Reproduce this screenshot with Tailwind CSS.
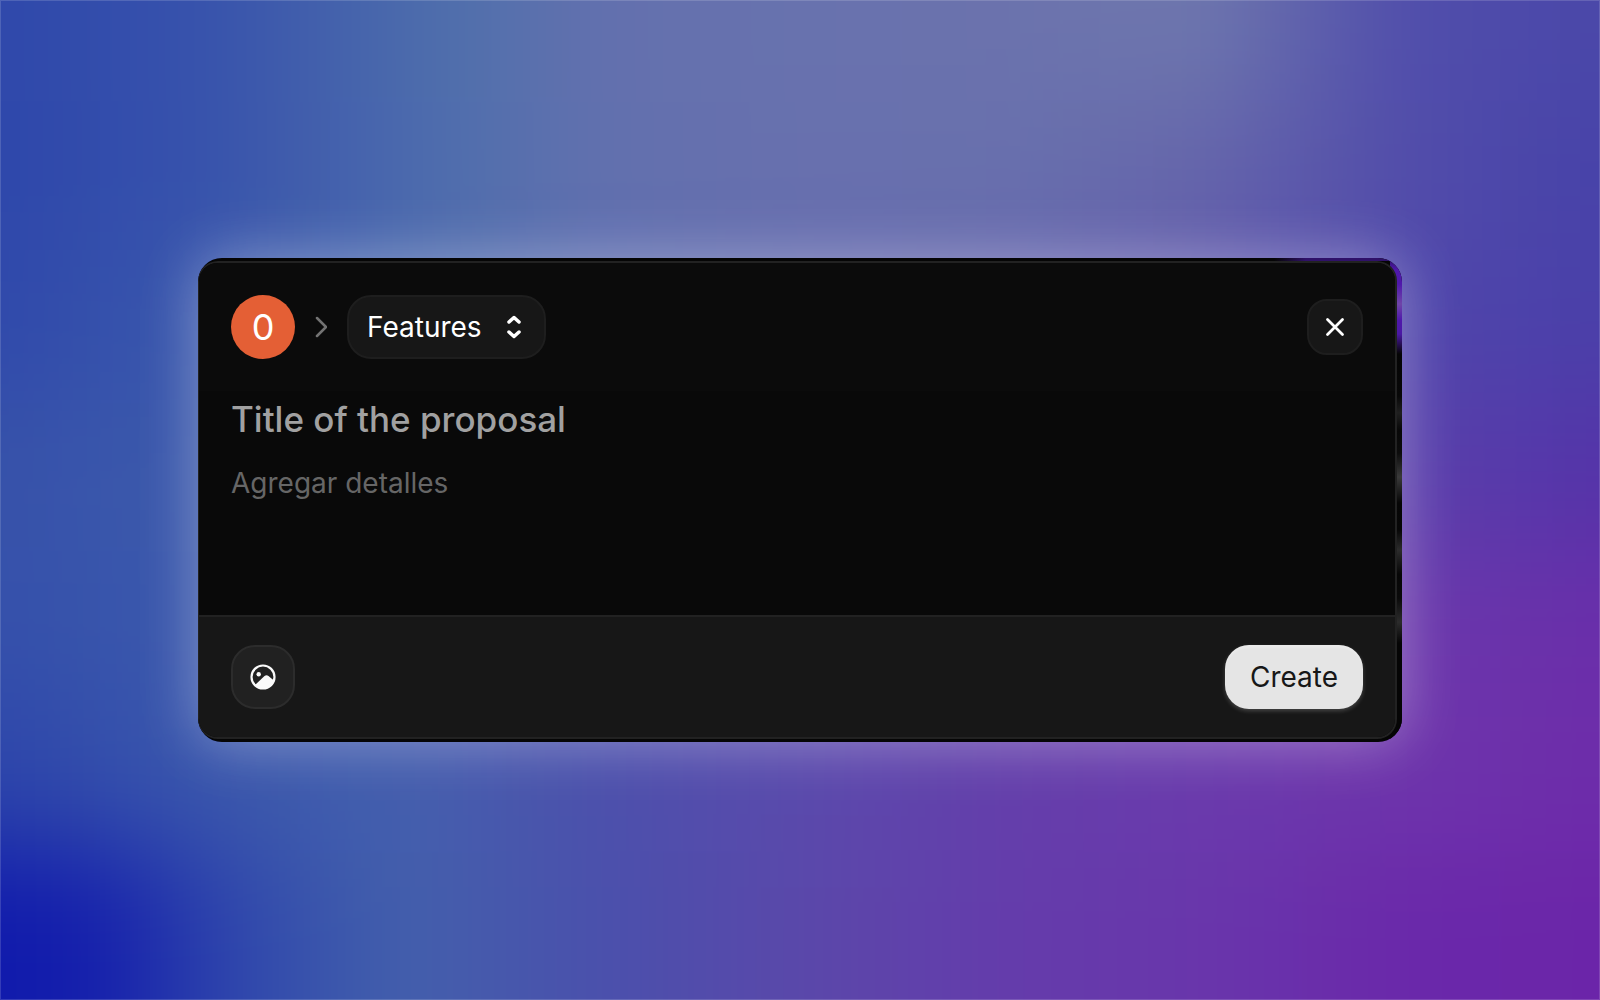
<!DOCTYPE html>
<html lang="en">
<head>
<meta charset="utf-8">
<meta name="viewport" content="width=device-width, initial-scale=1">
<title>New proposal</title>
<script src="https://cdn.jsdelivr.net/npm/@tailwindcss/browser@4"></script>
</head>
<body class="relative isolate flex min-h-screen items-center justify-center overflow-hidden bg-[#4a55ac] font-['Inter',sans-serif]">

<!-- Blurred colour wash behind the dialog -->
<svg class="absolute inset-0 -z-10 h-full w-full" viewBox="0 0 1600 1000" preserveAspectRatio="none" aria-hidden="true">
  <defs>
    <filter id="soft" filterUnits="userSpaceOnUse" x="-200" y="-200" width="2000" height="1400" color-interpolation-filters="sRGB"><feGaussianBlur stdDeviation="40 55"/></filter>
    <linearGradient id="a"><stop offset="0.1" stop-color="#2f48ab"/><stop offset="0.2" stop-color="#3752ac"/><stop offset="0.33" stop-color="#5070ac"/><stop offset="0.4" stop-color="#6370ae"/><stop offset="0.5" stop-color="#6872ae"/><stop offset="0.6" stop-color="#6b72ad"/><stop offset="0.7" stop-color="#6e77ad"/><stop offset="0.8" stop-color="#514eab"/><stop offset="0.9" stop-color="#4a47a9"/></linearGradient>
    <linearGradient id="b"><stop offset="0.1" stop-color="#2e47ab"/><stop offset="0.2" stop-color="#3752ac"/><stop offset="0.33" stop-color="#506fad"/><stop offset="0.4" stop-color="#6270ae"/><stop offset="0.5" stop-color="#6870ae"/><stop offset="0.6" stop-color="#6870ad"/><stop offset="0.7" stop-color="#6565ab"/><stop offset="0.8" stop-color="#524daa"/><stop offset="0.9" stop-color="#4742a9"/></linearGradient>
    <linearGradient id="c"><stop offset="0.1" stop-color="#3049ab"/><stop offset="0.2" stop-color="#3a58ac"/><stop offset="0.3" stop-color="#4a68ad"/><stop offset="0.4" stop-color="#5c6cb0"/><stop offset="0.5" stop-color="#6268ae"/><stop offset="0.6" stop-color="#6462ad"/><stop offset="0.7" stop-color="#6055ac"/><stop offset="0.8" stop-color="#5046ab"/><stop offset="0.9" stop-color="#4a3fa9"/></linearGradient>
    <linearGradient id="d"><stop offset="0.1" stop-color="#3752aa"/><stop offset="0.2" stop-color="#3c5aac"/><stop offset="0.7" stop-color="#6045ac"/><stop offset="0.8" stop-color="#5a40ab"/><stop offset="0.9" stop-color="#5433a9"/></linearGradient>
    <linearGradient id="e"><stop offset="0.1" stop-color="#3550ab"/><stop offset="0.2" stop-color="#3b59ac"/><stop offset="0.7" stop-color="#6c40ac"/><stop offset="0.8" stop-color="#6a38ab"/><stop offset="0.9" stop-color="#6a2eaa"/></linearGradient>
    <linearGradient id="f"><stop offset="0.1" stop-color="#2d45ab"/><stop offset="0.2" stop-color="#3a57ac"/><stop offset="0.3" stop-color="#4460ad"/><stop offset="0.4" stop-color="#4c50ac"/><stop offset="0.5" stop-color="#5a4aac"/><stop offset="0.6" stop-color="#643fab"/><stop offset="0.7" stop-color="#6a3bac"/><stop offset="0.8" stop-color="#6e35ab"/><stop offset="0.9" stop-color="#6e2caa"/></linearGradient>
    <linearGradient id="g"><stop offset="0.1" stop-color="#101aac"/><stop offset="0.15" stop-color="#1620ac"/><stop offset="0.22" stop-color="#3048ac"/><stop offset="0.3" stop-color="#4360ac"/><stop offset="0.4" stop-color="#4a50ac"/><stop offset="0.5" stop-color="#5a48aa"/><stop offset="0.6" stop-color="#643cab"/><stop offset="0.7" stop-color="#6936ab"/><stop offset="0.8" stop-color="#6a28aa"/><stop offset="0.9" stop-color="#6b25a9"/></linearGradient>
  </defs>
  <g filter="url(#soft)">
    <rect x="-200" y="-200" width="2000" height="300" fill="url(#a)"/>
    <rect x="-200" y="100" width="2000" height="150" fill="url(#b)"/>
    <rect x="-200" y="250" width="2000" height="150" fill="url(#c)"/>
    <rect x="-200" y="400" width="2000" height="150" fill="url(#d)"/>
    <rect x="-200" y="550" width="2000" height="150" fill="url(#e)"/>
    <rect x="-200" y="700" width="2000" height="150" fill="url(#f)"/>
    <rect x="-200" y="850" width="2000" height="350" fill="url(#g)"/>
  </g>
</svg>
<div class="pointer-events-none absolute inset-0 -z-10 border border-white/15"></div>

<main class="mx-auto w-full max-w-[1204px] rounded-3xl shadow-[0_0_60px_rgba(255,255,255,0.36)]">
  <div class="relative overflow-hidden rounded-3xl bg-[#050505] py-[3px] pr-[5px]">
    
    <div class="absolute top-0 right-0 h-[3px] w-32 bg-linear-to-r from-transparent to-[#2f1169] to-25%"></div>
    <div class="absolute top-0 right-0 h-full w-3 bg-[linear-gradient(180deg,#2f1169_0px,#4f18ab_12px,#4f18ab_26px,#6f45a8_46px,#4f18ab_62px,#4a18a4_76px,#050505_96px,#080808_138px,#202020_155px,#080808_172px,#0c0c0c_195px,#3a3a3a_219px,#060606_245px,#070707_272px,#2c2c2c_292px,#070707_316px,#0a0a0a_340px,#2c2c2c_364px,#050505_385px)]"></div>

    <form class="relative overflow-hidden rounded-[20px] border-2 border-l border-[#222222] bg-[#090909]">
      <header class="flex h-32 items-center justify-between bg-[#0b0b0b] px-8">
        <div class="flex items-center">
          <span class="flex size-16 items-center justify-center rounded-full bg-[#e45f35] text-4xl text-white">0</span>
          <svg class="ml-5 h-6 w-3" viewBox="0 0 12 24" fill="none" stroke="#737373" stroke-width="2.500" stroke-linecap="round" stroke-linejoin="round" aria-hidden="true"><path d="M2 3 11 12 2 21"/></svg>
          <div class="relative ml-5">
            <select aria-label="Board" class="h-16 w-[199px] appearance-none rounded-3xl border-2 border-[#1e1e1e] bg-[#171717] pl-[18px] text-[28px] text-white">
              <option>Features</option>
            </select>
            <svg class="pointer-events-none absolute top-5 right-6 h-6 w-4" viewBox="0 0 16 24" fill="none" stroke="#fff" stroke-width="3.500" stroke-linecap="round" stroke-linejoin="round" aria-hidden="true"><path d="M3 7 8 2.500 13 7M3 17 8 21.500 13 17"/></svg>
          </div>
        </div>
        <button type="button" aria-label="Close" class="flex size-14 items-center justify-center rounded-[20px] border-2 border-[#1e1e1e] bg-[#171717]">
          <svg class="size-5" viewBox="0 0 20 20" fill="none" stroke="#fff" stroke-width="2.800" stroke-linecap="round" aria-hidden="true"><path d="M2.500 2.500 17.500 17.500M17.500 2.500 2.500 17.500"/></svg>
        </button>
      </header>

      <div class="flex flex-col px-8 pb-1">
        <input aria-label="Title" placeholder="Title of the proposal" class="h-14 w-full bg-transparent text-[35px] font-medium text-white outline-none placeholder:text-[#a1a1a1]">
        <textarea aria-label="Details" placeholder="Agregar detalles" class="mt-4 h-[148px] w-full resize-none bg-transparent text-[28px] leading-10 text-white outline-none placeholder:text-[#666666]"></textarea>
      </div>

      <footer class="flex items-center justify-between border-t-2 border-[#222222] bg-[#171717] px-8 py-7">
        <button type="button" aria-label="Add image" class="flex size-16 items-center justify-center rounded-3xl border-2 border-[#2c2c2c] bg-[#212121]">
          <svg class="size-[26px]" viewBox="0 0 26 26" aria-hidden="true"><circle cx="13" cy="13" r="11.500" fill="none" stroke="#fafafa" stroke-width="2.200"/><circle cx="8.700" cy="10.200" r="2.200" fill="#fafafa"/><path d="M4.500 21.500 14.500 12Q16.500 10.500 18.500 12L24.500 17A12.500 12.500 0 0 1 4.500 21.500Z" fill="#fafafa"/></svg>
        </button>
        <button type="submit" class="h-16 w-[138px] rounded-3xl bg-[#e5e5e5] text-[28px] text-[#171717] shadow-[0_2px_4px_rgba(255,255,255,0.2),inset_0_3px_2px_rgba(255,255,255,0.2)]">Create</button>
      </footer>
    </form>
  </div>
</main>
</body>
</html>
